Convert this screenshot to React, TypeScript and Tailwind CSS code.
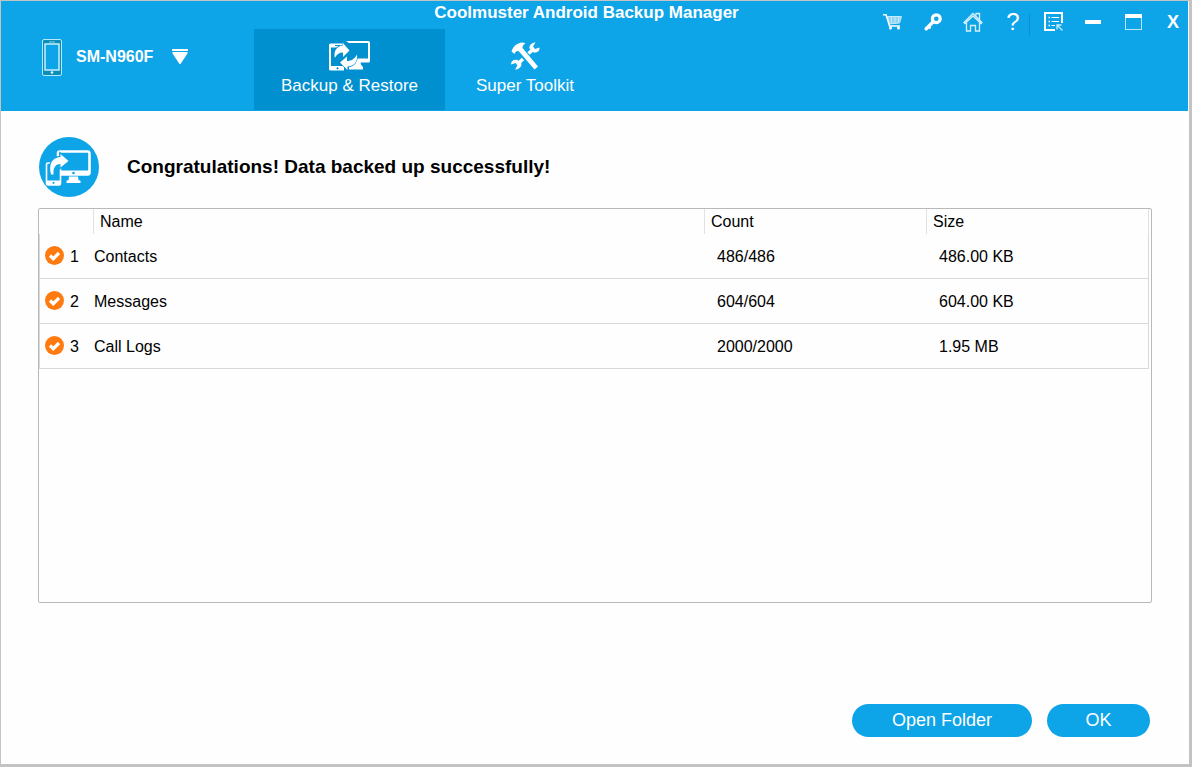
import type { ReactNode } from "react";

const rows = [
  { id: 1, name: "Contacts", count: "486/486", size: "486.00 KB" },
  { id: 2, name: "Messages", count: "604/604", size: "604.00 KB" },
  { id: 3, name: "Call Logs", count: "2000/2000", size: "1.95 MB" },
];

const PhoneIcon = () => (
  <svg width="20" height="37" viewBox="0 0 20 37" fill="none">
    <rect x="0.5" y="0.5" width="19" height="36" rx="1.5" fill="#0b8fb9" stroke="#b5e8f8" />
    <rect x="3" y="5" width="14" height="26" fill="#0ea4e8" stroke="#c8effb" strokeWidth="1.5" />
    <path d="M7 3h6" stroke="#7fd0e6" />
    <circle cx="10" cy="33.5" r="1.3" fill="#e8faff" />
  </svg>
);

const CaretIcon = () => (
  <svg width="16" height="15" viewBox="0 0 16 15" fill="#fff">
    <path d="M0 0h16v2H0zM0.5 3h15v1.5L8.5 15h-1L0.5 4.5z" />
  </svg>
);

const BackupIcon = () => (
  <svg width="41" height="30" viewBox="0 0 41 30">
    <path d="M17 0h22.500Q41 0 41 1.500v18.500q0 1.500-1.500 1.500H31.500q.3 3 2.500 4.500v2.500H20V26.500q2-1.500 2.500-4.500l2-4.500h14.500V2H20z" fill="#fff" />
    <path d="M1.500 2.500H15V29.500H1.500Q0 29.500 0 28V4Q0 2.500 1.500 2.500z" fill="#fff" />
    <path d="M2 6.500h14v18.500H2z" fill="#008fcf" />
    <circle cx="8.500" cy="27.300" r="1.100" fill="#008fcf" />
    <path d="M6 4.500h5" stroke="#008fcf" />
    <path d="M5.800 17C4.500 10 7.500 5 13.500 4.700V1.500l7 8-6.500 6.500v-4.500c-4 0-6.500 2-8.200 5.500z" fill="#fff" stroke="#008fcf" strokeWidth="1.200" paintOrder="stroke" />
    <path d="M28 13.500C29 20.500 25 25.500 18.500 25.500v3.500L11 21.500l7-6v4.500c4.500 0 7.500-2 10-6.500z" fill="#fff" stroke="#008fcf" strokeWidth="1.200" paintOrder="stroke" />
  </svg>
);

const ToolkitIcon = () => (
  <svg width="29" height="28" viewBox="0 0 29 28" fill="#fff">
    <path d="M0.500 9.500C2 4.500 6 1 11 .5l3.500.5C12.500 2.500 11.500 4 11.500 6L27 24.500l-3.500 3L8 9.500C6 8.500 4.500 9.500 3.500 12z" />
    <path d="M7 21.500L12 17M17.500 11.500L22 7.500" stroke="#fff" strokeWidth="3.500" />
    <path d="M24.500 0.500l-2.500 4 2 2.500 4.500-1.500c.5 3.500-2.500 5.500-6 5l-4-4c-.5-3.500 2.500-6 6-6z" />
    <path d="M4 27.500l2.500-4-2-2.500L0 22.500c0-3.500 2.500-5.500 6.500-4.500l4 3.500c0 3.500-2.500 6-6.500 6z" />
  </svg>
);

const CartIcon = () => (
  <svg width="20" height="16" viewBox="0 0 20 16" fill="none">
    <path d="M4.500 2.500h14l-2 6.500-10.500 1z" fill="#8fd5f5" stroke="#c5ebfb" />
    <path d="M0 0.800h3L6.500 12H17" stroke="#fff" strokeWidth="1.500" />
    <path d="M8.500 3v6M12 3v6M15.500 3v5" stroke="#d8f2fd" strokeWidth="0.700" />
    <circle cx="7.500" cy="14" r="1.500" fill="#fff" />
    <circle cx="15.500" cy="14" r="1.500" fill="#fff" />
  </svg>
);

const KeyIcon = () => (
  <svg width="18" height="18" viewBox="0 0 18 18" fill="none">
    <circle cx="12.300" cy="5.700" r="3.900" stroke="#fff" strokeWidth="3.200" />
    <path d="M9.500 8.500L1.500 16.500" stroke="#fff" strokeWidth="3.400" />
    <path d="M4 13l2.500 2.500M1 15.500l1.500 1.500" stroke="#fff" strokeWidth="2" />
  </svg>
);

const HomeIcon = () => (
  <svg width="20" height="20" viewBox="0 0 20 20" fill="none" stroke="#d6f1fd" strokeWidth="1.300">
    <path d="M1 10.500L10 1.500l9 9-1 1-8-7.500-8 7.500z" />
    <path d="M3.500 11v8h4v-5.500h5V19h4v-8" />
    <path d="M13 3.500V1.500h3.500v6" />
  </svg>
);

const FeedbackIcon = () => (
  <svg width="19" height="19" viewBox="0 0 19 19" fill="none" stroke="#fff">
    <path d="M18 11V1H1v17h10" strokeWidth="2" />
    <path d="M7.500 5.500H15M7.500 9.500H15M7.500 13.500h3.500" strokeWidth="1.200" />
    <path d="M4.500 5.500H6M4.500 9.500H6M4.500 13.500H6" strokeWidth="1.500" />
    <path d="M13 17.500v-4.500h4.500M13.500 13.500l5 5" strokeWidth="1.300" stroke="#c8ecfb" />
  </svg>
);

const MinimizeIcon = () => (
  <svg width="16" height="4" viewBox="0 0 16 4">
    <rect width="16" height="4" rx="0.500" fill="#fff" />
  </svg>
);

const MaximizeIcon = () => (
  <svg width="17" height="16" viewBox="0 0 17 16" fill="none">
    <rect x="0.500" y="0.500" width="16" height="15" stroke="#b9e5f9" />
    <path d="M0 2h17" stroke="#fff" strokeWidth="4" />
  </svg>
);

const SuccessIcon = () => (
  <svg width="60" height="60" viewBox="0 0 60 60">
    <circle cx="30" cy="30" r="30" fill="#0ea4e8" />
    <rect x="19" y="14.500" width="31.500" height="23" rx="2" fill="none" stroke="#fff" strokeWidth="2.600" />
    <path d="M19 33.500h32v4.500H19z" fill="#fff" />
    <circle cx="34.500" cy="36" r="1.300" fill="#0ea4e8" />
    <path d="M30 39.500h9l.5 3.500 2 .8V46H27.500v-2.200l2-.8z" fill="#fff" />
    <rect x="7.500" y="26" width="14" height="22" rx="1.500" fill="#0ea4e8" stroke="#fff" strokeWidth="1.600" />
    <path d="M8 43.500h13.500V48H8z" fill="#fff" />
    <circle cx="14.500" cy="45.800" r="1.100" fill="#0ea4e8" />
    <path d="M12 37.500C9.500 27 13 20.500 21.500 20v-3L29.500 24l-8 6.500V27c-4.500 0-7.500 3-7 10.500z" fill="#fff" stroke="#0ea4e8" strokeWidth="2.500" paintOrder="stroke" />
  </svg>
);

const CheckIcon = () => (
  <svg width="20" height="22" viewBox="0 0 20 22" className="shrink-0">
    <circle cx="10.500" cy="9.500" r="9.500" fill="#ff7a0f" />
    <path d="M6 9.500l3.300 3.200L15 7" fill="none" stroke="#fff" strokeWidth="3.200" />
  </svg>
);

const ToolButton = ({ label, children }: { label: string; children: ReactNode }) => (
  <button aria-label={label} className="flex h-[23px] w-[30px] items-center justify-center leading-none text-white">
    {children}
  </button>
);

const Tab = ({ active, className, icon, label }: { active?: boolean; className: string; icon: ReactNode; label: string }) => (
  <button
    aria-current={active ? "page" : undefined}
    className={`flex h-[81px] flex-col items-center pt-3 text-[17px] leading-5 text-white ${className}`}
  >
    <span className="flex h-[30px] items-center">{icon}</span>
    <span className="mt-[5px]">{label}</span>
  </button>
);

export default function App() {
  return (
    <div className="flex min-h-screen flex-col border-t border-r-3 border-b-3 border-l border-[#c3c3c3] bg-[#fefefe] font-['Liberation_Sans',Arial,sans-serif] text-black">
      {/* Title bar and navigation */}
      <header className="mr-px grid grid-cols-[253px_1fr_auto] grid-rows-[28px_82px] bg-[#0ea4e8] text-white">
        <h1 className="col-span-3 col-start-1 row-start-1 pt-[2px] pr-4 text-center text-[17px] leading-5 font-bold">
          Coolmuster Android Backup Manager
        </h1>

        <button aria-haspopup="listbox" className="col-start-1 row-start-2 flex h-14 items-center pl-[41px] text-base font-bold">
          <PhoneIcon />
          <span className="ml-[14px]">SM-N960F</span>
          <span className="ml-[19px] pb-[2px]">
            <CaretIcon />
          </span>
        </button>

        <nav className="col-start-2 row-start-2 flex">
          <Tab active className="w-[191px] bg-[#008fcf]" icon={<BackupIcon />} label="Backup & Restore" />
          <Tab className="w-40" icon={<ToolkitIcon />} label="Super Toolkit" />
        </nav>

        <div className="col-start-3 row-span-2 row-start-1 flex items-start pt-[9px]">
          <div className="flex gap-[10px]">
            <ToolButton label="Buy"><CartIcon /></ToolButton>
            <ToolButton label="Register"><KeyIcon /></ToolButton>
            <ToolButton label="Home"><HomeIcon /></ToolButton>
            <ToolButton label="Help"><span className="text-2xl leading-none">?</span></ToolButton>
          </div>
          <span className="mt-1 mr-2 ml-px h-[22px] w-px bg-[#0b8fcd]" />
          <div className="flex gap-[10px]">
            <ToolButton label="Feedback"><FeedbackIcon /></ToolButton>
            <ToolButton label="Minimize"><MinimizeIcon /></ToolButton>
            <ToolButton label="Maximize"><MaximizeIcon /></ToolButton>
            <ToolButton label="Close"><span className="text-lg leading-none font-bold">X</span></ToolButton>
          </div>
        </div>
      </header>

      {/* Backup result */}
      <main className="flex flex-1 flex-col px-[37px] pt-[26px] pb-[27px]">
        <div className="flex items-center pl-px">
          <SuccessIcon />
          <h2 className="ml-7 text-[19px] leading-6 font-bold">Congratulations! Data backed up successfully!</h2>
        </div>

        <div className="mt-[11px] flex-1 rounded-xs border border-[#b9b9b9] pr-[2px]">
          <table className="w-full table-fixed border-separate border-spacing-0 text-left text-base leading-5">
            <colgroup>
              <col className="w-[55px]" />
              <col />
              <col className="w-[222px]" />
              <col className="w-[222px]" />
            </colgroup>
            <thead>
              <tr className="h-[25px]">
                <td className="border-r border-[#e2e2e2] p-0" />
                <th className="border-r border-[#e2e2e2] py-0 pr-0 pl-[6px] font-normal">Name</th>
                <th className="border-r border-[#e2e2e2] py-0 pr-0 pl-[6px] font-normal">Count</th>
                <th className="border-r border-[#e2e2e2] py-0 pr-0 pl-[6px] font-normal">Size</th>
              </tr>
            </thead>
            <tbody>
              {rows.map((row) => (
                <tr key={row.id} className="h-[45px]">
                  <td className="border-b border-l border-[#d9d9d9] pt-px pr-0 pb-0 pl-1">
                    <div className="flex items-center gap-[6px]">
                      <CheckIcon />
                      {row.id}
                    </div>
                  </td>
                  <td className="border-b border-[#d9d9d9] px-0 pt-px pb-0">{row.name}</td>
                  <td className="border-b border-[#d9d9d9] pt-px pr-0 pb-0 pl-3">{row.count}</td>
                  <td className="border-r border-b border-[#d9d9d9] pt-px pr-0 pb-0 pl-3">{row.size}</td>
                </tr>
              ))}
            </tbody>
          </table>
        </div>

        <div className="mt-[101px] flex justify-end gap-[15px] pr-[2px] text-lg text-white">
          <button className="h-[33px] w-[180px] rounded-full bg-[#0ea4e8] pb-px leading-8">Open Folder</button>
          <button className="h-[33px] w-[103px] rounded-full bg-[#0ea4e8] pb-px leading-8">OK</button>
        </div>
      </main>
    </div>
  );
}
